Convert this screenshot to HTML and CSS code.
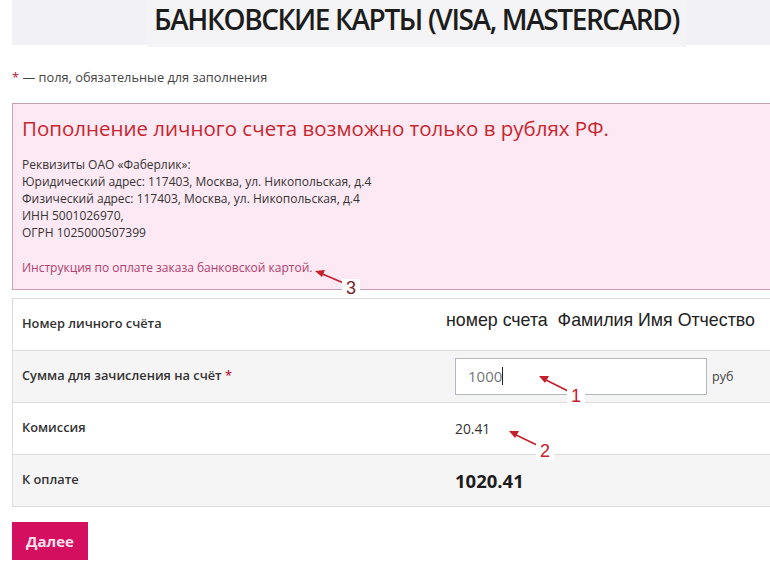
FILE: index.html
```html
<!DOCTYPE html>
<html lang="ru">
<head>
    <meta charset="UTF-8">
    <meta content="width=device-width, initial-scale=1.0" name="viewport">
    <title>Банковские карты</title>
    <link rel="stylesheet" href="styles.css">
</head>
<body>

<div class="page">

    <!-- Page heading -->
    <div class="title-band">
        <div class="title-box">
            <h1 class="title">БАНКОВСКИЕ КАРТЫ (VISA, MASTERCARD)</h1>
        </div>
    </div>

    <p class="required-note"><span class="star">*</span> — поля, обязательные для заполнения</p>

    <!-- Notice box -->
    <div class="notice">
        <h2 class="notice-title">Пополнение личного счета возможно только в рублях РФ.</h2>
        <p class="notice-text">
            Реквизиты ОАО «Фаберлик»:<br>
            Юридический адрес: 117403, Москва, ул. Никопольская, д.4<br>
            Физический адрес: 117403, Москва, ул. Никопольская, д.4<br>
            ИНН 5001026970,<br>
            ОГРН 1025000507399
        </p>
        <a class="notice-link" href="#">Инструкция по оплате заказа банковской картой.</a>
    </div>

    <!-- Payment form -->
    <div class="form-table">
        <div class="form-row">
            <div class="label">Номер личного счёта</div>
            <div class="value account">номер счета&nbsp; Фамилия Имя Отчество</div>
        </div>
        <div class="form-row gray">
            <div class="label">Сумма для зачисления на счёт <span class="star">*</span></div>
            <div class="value">
                <div class="amount-input">1000<span class="caret"></span></div>
                <span class="currency">руб</span>
            </div>
        </div>
        <div class="form-row">
            <div class="label">Комиссия</div>
            <div class="value small">20.41</div>
        </div>
        <div class="form-row gray">
            <div class="label">К оплате</div>
            <div class="value total">1020.41</div>
        </div>
    </div>

    <button class="next-btn">Далее</button>

    <!-- Annotations drawn over the screenshot -->
    <svg class="marks" width="770" height="569" viewBox="0 0 770 569">
        <g stroke="#c4202c" stroke-width="1.6" fill="#c4202c">
            <line x1="346" y1="284" x2="320" y2="273"/>
            <polygon points="315,271 325,270 322,277" stroke="none"/>
            <line x1="568" y1="391" x2="544" y2="379"/>
            <polygon points="539,376 549,376 545,383" stroke="none"/>
            <line x1="539" y1="446" x2="514" y2="434"/>
            <polygon points="509,431 519,431 515,438" stroke="none"/>
        </g>
    </svg>
    <span class="mark-num num3">3</span>
    <span class="mark-num num1">1</span>
    <span class="mark-num num2">2</span>

</div>

</body>
</html>
```

FILE: styles.css
```css
body {
    margin: 0;
    overflow: hidden;
    font-family: "Open Sans", Arial, sans-serif;
    color: #333;
    background-color: white;
}
.page {
    position: relative;
    width: 770px;
    height: 569px;
    padding-left: 12px;
    box-sizing: border-box;
}
.title-band {
    height: 45px;
    margin-right: -20px;
    background-color: #f2f2f6;
}
.title-box {
    width: 539px;
    height: 47px;
    margin-left: 135px;
    background-color: #f4f4f6;
    text-align: center;
}
.title {
    margin: 0;
    font-size: 28px;
    font-weight: 600;
    letter-spacing: -1.4px;
    line-height: 38px;
    color: #1c1c1c;
    white-space: nowrap;
}
.required-note {
    margin: 24px 0 0;
    font-size: 12.8px;
    line-height: 17px;
    color: #444;
}
.star {
    color: #c0143c;
}
.notice {
    margin-top: 17px;
    margin-right: -20px;
    height: 187px;
    box-sizing: border-box;
    border: 1px solid #c7a2b6;
    background-color: #fde9f4;
    padding: 11px 9px;
}
.notice-title {
    margin: 0;
    font-size: 20.5px;
    font-weight: 400;
    line-height: 26px;
    color: #c8262e;
}
.notice-text {
    margin: 15px 0 0;
    font-size: 12px;
    line-height: 17px;
    color: #333;
}
.notice-link {
    display: block;
    margin-top: 18px;
    font-size: 12px;
    line-height: 17px;
    color: #b0406c;
    text-decoration: none;
}
.form-table {
    margin-top: 8px;
    margin-right: -20px;
    border: 1px solid #dcdcdc;
    border-bottom: none;
}
.form-row {
    display: flex;
    height: 52px;
    box-sizing: border-box;
    border-bottom: 1px solid #dcdcdc;
    background-color: #fff;
}
.form-row.gray {
    background-color: #f5f5f5;
}
.label {
    width: 433px;
    padding: 16px 0 0 9px;
    font-size: 12.8px;
    font-weight: 600;
    line-height: 17px;
    color: #333;
}
.value {
    display: flex;
    align-items: center;
    font-size: 12px;
}
.value.account {
    margin-left: -9px;
    font-family: "Liberation Sans", Arial, sans-serif;
    font-size: 17.8px;
    color: #222;
    align-self: center;
    margin-top: -8px;
}
.value.small {
    align-self: flex-start;
    padding-top: 16px;
    font-size: 13.8px;
    color: #333;
}
.value.total {
    align-self: flex-start;
    padding-top: 13px;
    font-size: 18.5px;
    font-weight: 700;
    color: #1c1c1c;
}
.amount-input {
    width: 252px;
    height: 37px;
    box-sizing: border-box;
    border: 1px solid #b4b8c0;
    background-color: #fff;
    padding: 0 12px;
    font-size: 15px;
    line-height: 35px;
    color: #777;
    margin-bottom: 1px;
}
.caret {
    display: inline-block;
    width: 1px;
    height: 18px;
    background-color: #222;
    vertical-align: middle;
    margin-top: -2px;
}
.currency {
    margin-left: 5px;
    font-size: 12.5px;
    color: #444;
}
.next-btn {
    margin-top: 15px;
    width: 76px;
    height: 38px;
    border: none;
    background-color: #d40f5f;
    color: #fde3f0;
    font-family: "Open Sans", Arial, sans-serif;
    font-size: 15px;
    font-weight: 700;
    cursor: pointer;
}
.marks {
    position: absolute;
    left: 0;
    top: 0;
    pointer-events: none;
}
.mark-num {
    position: absolute;
    background-color: #fff;
    padding: 0 4px;
    font-family: "Liberation Sans", Arial, sans-serif;
    font-size: 18px;
    line-height: 18px;
    color: #c4202c;
}
.num3 {
    left: 342px;
    top: 279px;
    color: #7a2430;
}
.num1 {
    left: 567px;
    top: 387px;
}
.num2 {
    left: 536px;
    top: 442px;
}
```
